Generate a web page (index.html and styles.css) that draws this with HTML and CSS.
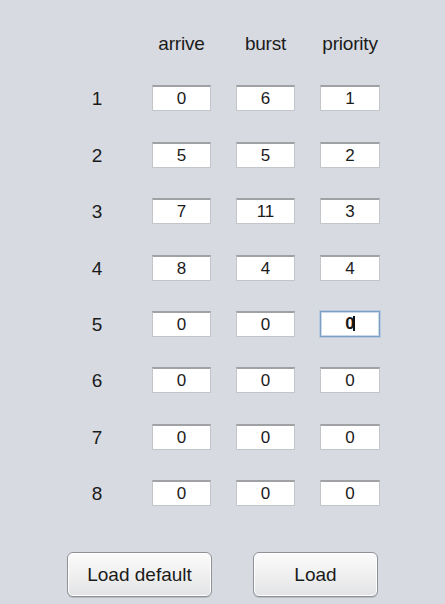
FILE: index.html
```html
<!DOCTYPE html>
<html>
<head>
<meta charset="utf-8">
<link rel="stylesheet" href="styles.css">
</head>
<body>
<div class="panel">
  <div class="table">
    <div class="head"></div>
    <div class="head">arrive</div>
    <div class="head">burst</div>
    <div class="head">priority</div>

    <div class="num">1</div><div class="box">0</div><div class="box">6</div><div class="box">1</div>
    <div class="num">2</div><div class="box">5</div><div class="box">5</div><div class="box">2</div>
    <div class="num">3</div><div class="box">7</div><div class="box">11</div><div class="box">3</div>
    <div class="num">4</div><div class="box">8</div><div class="box">4</div><div class="box">4</div>
    <div class="num">5</div><div class="box">0</div><div class="box">0</div><div class="box focus">0<span class="caret"></span></div>
    <div class="num">6</div><div class="box">0</div><div class="box">0</div><div class="box">0</div>
    <div class="num">7</div><div class="box">0</div><div class="box">0</div><div class="box">0</div>
    <div class="num">8</div><div class="box">0</div><div class="box">0</div><div class="box">0</div>
  </div>
  <div class="buttons">
    <button class="btn wide">Load default</button>
    <button class="btn narrow">Load</button>
  </div>
</div>
</body>
</html>
```

FILE: styles.css
```css
html, body {
  margin: 0;
  padding: 0;
  background: #d7dae1;
}
body {
  width: 445px;
  height: 604px;
  overflow: hidden;
  font-family: "Liberation Sans", Arial, sans-serif;
  color: #1b1b1b;
}
.panel {
  padding: 33px 0 0 67px;
}
.table {
  display: grid;
  grid-template-columns: 60px 59px 59px 60px;
  grid-template-rows: 22px;
  grid-auto-rows: 26px;
  column-gap: 25px;
  row-gap: 30.4px;
}
.head {
  font-size: 19px;
  line-height: 22px;
  text-align: center;
  letter-spacing: -0.2px;
}
.num {
  font-size: 19px;
  line-height: 26px;
  text-align: center;
  padding-top: 1px;
}
.box {
  box-sizing: border-box;
  background: #ffffff;
  border: 1px solid #c2c5ca;
  border-top: 2px solid #9fa1a5;
  font-size: 17px;
  line-height: 22px;
  text-align: center;
  padding-top: 1px;
  position: relative;
}
.box.focus {
  border: 1px solid #7e9fc4;
  box-shadow: 0 0 0 1px #b7cae0, inset 0 0 0 1px #c9d8ea;
  font-weight: bold;
}
.caret {
  display: inline-block;
  width: 2px;
  height: 15px;
  background: #111;
  vertical-align: -2px;
  margin-left: -2px;
}
.buttons {
  display: flex;
  margin-top: 46px;
  gap: 41px;
}
.btn {
  box-sizing: border-box;
  height: 45px;
  border: 1px solid #8e9196;
  border-radius: 6px;
  background: linear-gradient(#fbfbfb 0%, #f1f1f1 45%, #e2e3e5 100%);
  box-shadow: inset 0 0 0 1px #ffffff, 0 1px 0 #b9bcc2;
  font-family: "Liberation Sans", Arial, sans-serif;
  font-size: 19px;
  color: #1b1b1b;
  padding: 0;
}
.btn.wide { width: 145px; }
.btn.narrow { width: 125px; }
```
